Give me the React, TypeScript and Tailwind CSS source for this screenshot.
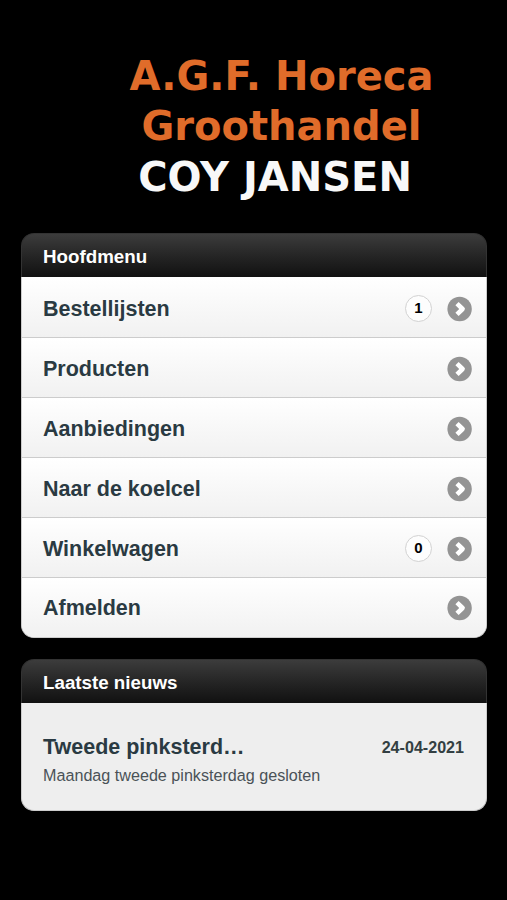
import React from 'react';

interface MenuItem {
  label: string;
  count?: number;
}

const menuItems: MenuItem[] = [
  { label: 'Bestellijsten', count: 1 },
  { label: 'Producten' },
  { label: 'Aanbiedingen' },
  { label: 'Naar de koelcel' },
  { label: 'Winkelwagen', count: 0 },
  { label: 'Afmelden' },
];

const ArrowIcon: React.FC = () => (
  <svg width="26" height="26" viewBox="0 0 26 26" aria-hidden="true">
    <circle cx="12.6" cy="13" r="12.2" fill="#949494" />
    <path d="M10 7.6 L15.6 13 L10 18.4" fill="none" stroke="#fff" strokeWidth="4.6" strokeLinejoin="round" />
  </svg>
);

const PanelHeader: React.FC<{ title: string }> = ({ title }) => (
  <h2 className="h-11 border border-b-0 border-[#333] rounded-t-[13px] bg-linear-to-b from-[#3c3c3c] to-[#111] px-[21px] text-[18.75px] leading-[45px] font-bold text-white">
    {title}
  </h2>
);

const App: React.FC = () => {
  return (
    <div className="h-[900px] w-full overflow-hidden bg-black px-[21px] font-['Liberation_Sans',Arial,sans-serif]">
      {/* Logo */}
      <header className="flex h-[233px] flex-col items-center pt-[51px] pl-[56px] font-['DejaVu_Sans',sans-serif] text-[40px] leading-[50px] font-bold whitespace-nowrap text-[#e06c2a]">
        <div>A.G.F. Horeca</div>
        <div>Groothandel</div>
        <div className="pr-[13px] pt-px text-[#f8f8f8]">COY JANSEN</div>
      </header>

      {/* Hoofdmenu */}
      <section className="w-[466px]">
        <PanelHeader title="Hoofdmenu" />
        <ul className="overflow-hidden rounded-b-[13px] border border-t-0 border-[#ccc] bg-white pt-[0.5px]">
          {menuItems.map((item) => (
            <li
              key={item.label}
              className="flex h-[60px] items-center border-b border-[#ccc] bg-linear-to-b from-white to-[#f1f1f1] pt-[3px] pr-[13px] pl-[21px] last:h-[59px] last:border-b-0 last:pt-px"
            >
              <span className="flex-1 pt-px text-[21.5px] font-bold text-[#2a3a42]">{item.label}</span>
              {item.count !== undefined && (
                <span className="mr-[15px] flex h-[27px] w-[27px] items-center justify-center rounded-full border-[1.5px] border-[#d2d2d2] bg-[#fdfdfd] text-[15px] font-bold text-black">
                  {item.count}
                </span>
              )}
              <ArrowIcon />
            </li>
          ))}
        </ul>
      </section>

      {/* Laatste nieuws */}
      <section className="mt-[21.5px] w-[466px]">
        <PanelHeader title="Laatste nieuws" />
        <div className="h-[108px] rounded-b-[13px] border border-t-0 border-[#ccc] bg-[#eee] px-[21px] pt-[29px]">
          <div className="flex items-center justify-between">
            <h3 className="text-[21.5px] leading-[30px] font-bold text-[#2a3a42]">Tweede pinksterd…</h3>
            <span className="mr-px pt-px text-[16.1px] font-bold text-[#333f42]">24-04-2021</span>
          </div>
          <p className="text-[16.15px] leading-[26px] text-[#4a5257]">Maandag tweede pinksterdag gesloten</p>
        </div>
      </section>
    </div>
  );
};

export default App;
